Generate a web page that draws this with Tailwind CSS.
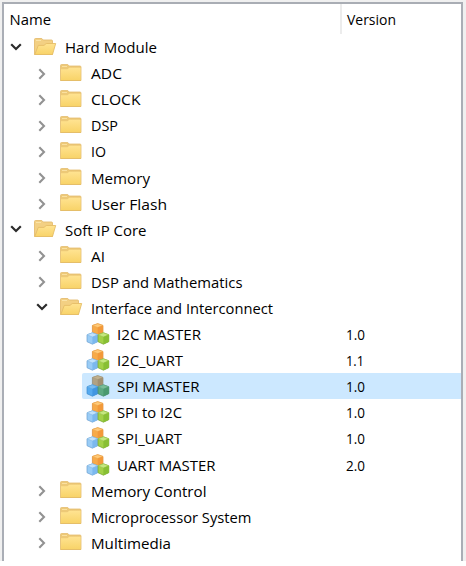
<!DOCTYPE html>
<html lang="en">
<head>
<meta charset="utf-8">
<title>IP Core Generator</title>
<script src="https://cdn.jsdelivr.net/npm/@tailwindcss/browser@4"></script>
</head>
<body class="bg-white w-[466px] h-[566px] overflow-hidden font-['Open_Sans','Noto_Sans',sans-serif] text-[15px] text-[#111]">
<svg class="absolute w-0 h-0">
  <defs>
    <linearGradient id="gold" x1="0" y1="0" x2="0" y2="1"><stop offset="0" stop-color="#ffe391"/><stop offset="1" stop-color="#f8d368"/></linearGradient>
    <symbol id="closed" viewBox="0 0 24 20">
      <path d="M1.5 2.5Q1.5 1.5 2.5 1.5H8.8L10.2 3H21Q22 3 22 4V17.5H1.5Z" fill="#edc977" stroke="#e5bd70" stroke-width=".8"/>
      <path d="M2 6.2H8.5L10.3 4.7H21.6V17.3H2Z" fill="url(#gold)"/>
      <path d="M3 3.5H8" stroke="#fae0a0"/>
      <path d="M1.5 17.5H22" stroke="#e5be69"/>
    </symbol>
    <symbol id="open" viewBox="0 0 24 20">
      <path d="M1.5 2.5Q1.5 1.5 2.5 1.5H8.8L10.2 3H18.5Q19.5 3 19.5 4V17.5H1.5Z" fill="#f3d083" stroke="#e4bc70" stroke-width=".9"/>
      <path d="M3 3.5H8" stroke="#fbe4a8"/>
      <path d="M1.8 17.5L5.3 8.4H11L13.2 6.5H22.7L19.5 17.5Z" fill="url(#gold)" stroke="#e5bd67" stroke-width=".9" stroke-linejoin="round"/>
    </symbol>
    <symbol id="down" viewBox="0 0 12 8"><path d="M1.2 1.3L6 6L10.8 1.3" fill="none" stroke="#2b2b2b" stroke-width="2.2"/></symbol>
    <symbol id="right" viewBox="0 0 8 12"><path d="M1.3 1.2L6 6L1.3 10.8" fill="none" stroke="#929292" stroke-width="2.1"/></symbol>
    <symbol id="cubes" viewBox="0 0 24 22">
      <g stroke-width=".7" stroke-linejoin="round">
        <path d="M6.4 2.5L11.7.7L17 2.5V9.3L11.7 11.8L6.4 9.3Z" fill="#f7aa48" stroke="#d98a35"/>
        <path d="M6.4 2.5L11.7.7L17 2.5L11.7 4.6Z" fill="#ffc978" stroke="#efaa4f"/>
        <path d="M11.7 4.6L17 2.5V9.3L11.7 11.8Z" fill="#f2993a" stroke="none"/>
        <path d="M1 11.8L6.4 9.8L11.8 11.8V18.7L6.4 21.2L1 18.7Z" fill="#99ccf6" stroke="#6b9fd0"/>
        <path d="M1 11.8L6.4 9.8L11.8 11.8L6.4 14Z" fill="#c2e2fc" stroke="#8dbde7"/>
        <path d="M6.4 14L11.8 11.8V18.7L6.4 21.2Z" fill="#7bb8ee" stroke="none"/>
        <path d="M12 11.8L17.4 9.8L22.8 11.8V18.7L17.4 21.2L12 18.7Z" fill="#a2d148" stroke="#76a332"/>
        <path d="M12 11.8L17.4 9.8L22.8 11.8L17.4 14Z" fill="#c4e780" stroke="#9dc552"/>
        <path d="M17.4 14L22.8 11.8V18.7L17.4 21.2Z" fill="#88bf34" stroke="none"/>
      </g>
    </symbol>
    <symbol id="cubes-selected" viewBox="0 0 24 22">
      <g stroke-width=".7" stroke-linejoin="round">
        <path d="M6.4 2.5L11.7.7L17 2.5V9.3L11.7 11.8L6.4 9.3Z" fill="#b0a284" stroke="#8f8874"/>
        <path d="M6.4 2.5L11.7.7L17 2.5L11.7 4.6Z" fill="#c0b08e" stroke="#a99c7e"/>
        <path d="M11.7 4.6L17 2.5V9.3L11.7 11.8Z" fill="#a09072" stroke="none"/>
        <path d="M1 11.8L6.4 9.8L11.8 11.8V18.7L6.4 21.2L1 18.7Z" fill="#55aaf0" stroke="#3c89cb"/>
        <path d="M1 11.8L6.4 9.8L11.8 11.8L6.4 14Z" fill="#78bcf3" stroke="#5ca7e3"/>
        <path d="M6.4 14L11.8 11.8V18.7L6.4 21.2Z" fill="#4096e2" stroke="none"/>
        <path d="M12 11.8L17.4 9.8L22.8 11.8V18.7L17.4 21.2L12 18.7Z" fill="#5daa82" stroke="#438b70"/>
        <path d="M12 11.8L17.4 9.8L22.8 11.8L17.4 14Z" fill="#7abd98" stroke="#60a889"/>
        <path d="M17.4 14L22.8 11.8V18.7L17.4 21.2Z" fill="#4a9a70" stroke="none"/>
      </g>
    </symbol>
  </defs>
</svg>
<div class="w-[466px] h-[561px] bg-[#f0f0f0] pt-[2px] pl-[2px]">
  <main class="w-[461px] h-[559px] bg-white border-t-2 border-x-2 border-t-[#a9adb4] border-x-[#aaaeb6] overflow-hidden">
    <header class="flex h-[30px] items-center">
      <div class="w-[338px] h-[30px] border-r-2 border-[#ececec] pl-[5px] flex items-center"><svg class="w-[50px] h-[22px] overflow-visible"><text x="0.5" y="17" textLength="41.5" lengthAdjust="spacingAndGlyphs">Name</text></svg></div>
      <div class="pl-[5px] flex items-center"><svg class="w-[60px] h-[22px] overflow-visible"><text x="0" y="17" textLength="49" lengthAdjust="spacingAndGlyphs">Version</text></svg></div>
    </header>
    <div id="tree"></div>
  </main>
</div>
<script>
const rows = [
  [0,'open','Hard Module',92],[1,'closed','ADC',31],[1,'closed','CLOCK',49.5],[1,'closed','DSP',27],[1,'closed','IO',15],
  [1,'closed','Memory',59],[1,'closed','User Flash',76],[0,'open','Soft IP Core',81.5],[1,'closed','AI',14],
  [1,'closed','DSP and Mathematics',151.5],[1,'open','Interface and Interconnect',182],
  [2,'cubes','I2C MASTER',84,'1.0'],[2,'cubes','I2C_UART',66,'1.1'],[2,'cubes-selected','SPI MASTER',82.5,'1.0'],
  [2,'cubes','SPI to I2C',65,'1.0'],[2,'cubes','SPI_UART',65,'1.0'],[2,'cubes','UART MASTER',98.5,'2.0'],
  [1,'closed','Memory Control',115.5],[1,'closed','Microprocessor System',160.5],[1,'closed','Multimedia',80]
];
const pads = ['pl-[6px]','pl-[32px]','pl-[58px]'];
const text = (value, width, box) => `<svg class="${box} h-[22px] shrink-0 overflow-visible"><text x="0" y="17.2" textLength="${width}" lengthAdjust="spacingAndGlyphs">${value}</text></svg>`;
document.getElementById('tree').innerHTML = rows.map(([level,icon,label,width,version]) => {
  const arrow = icon === 'open'
    ? '<svg class="w-[12px] h-[8px] -mt-[1px]"><use href="#down"/></svg>'
    : icon === 'closed' ? '<svg class="w-[8px] h-[12px] mt-[1px]"><use href="#right"/></svg>' : '';
  const picture = level === 2
    ? `<svg class="w-[24px] h-[22px] mr-[7px] shrink-0"><use href="#${icon}"/></svg>`
    : `<svg class="w-[24px] h-[20px] mr-[8px] -mt-[1px] shrink-0"><use href="#${icon}"/></svg>`;
  const selected = icon === 'cubes-selected';
  return `<div class="flex h-[26.1px] ${pads[level]}">
    ${level < 2 ? `<span class="w-[12px] mr-[9px] flex items-center justify-center shrink-0">${arrow}</span>` : '<span class="w-[20px] shrink-0"></span>'}
    <div class="flex flex-1 items-center ${selected ? 'bg-[#cce8ff] rounded-l-[2px]' : ''} ${level === 2 ? 'pl-[4px]' : 'pl-[2px]'}">
      ${picture}${text(label, width, level === 2 ? 'w-[229px]' : 'w-[190px]')}
      ${version ? text(version, version === '1.1' ? 18 : 19, 'w-[20px]') : ''}
    </div></div>`;
}).join('');
</script>
</body>
</html>
